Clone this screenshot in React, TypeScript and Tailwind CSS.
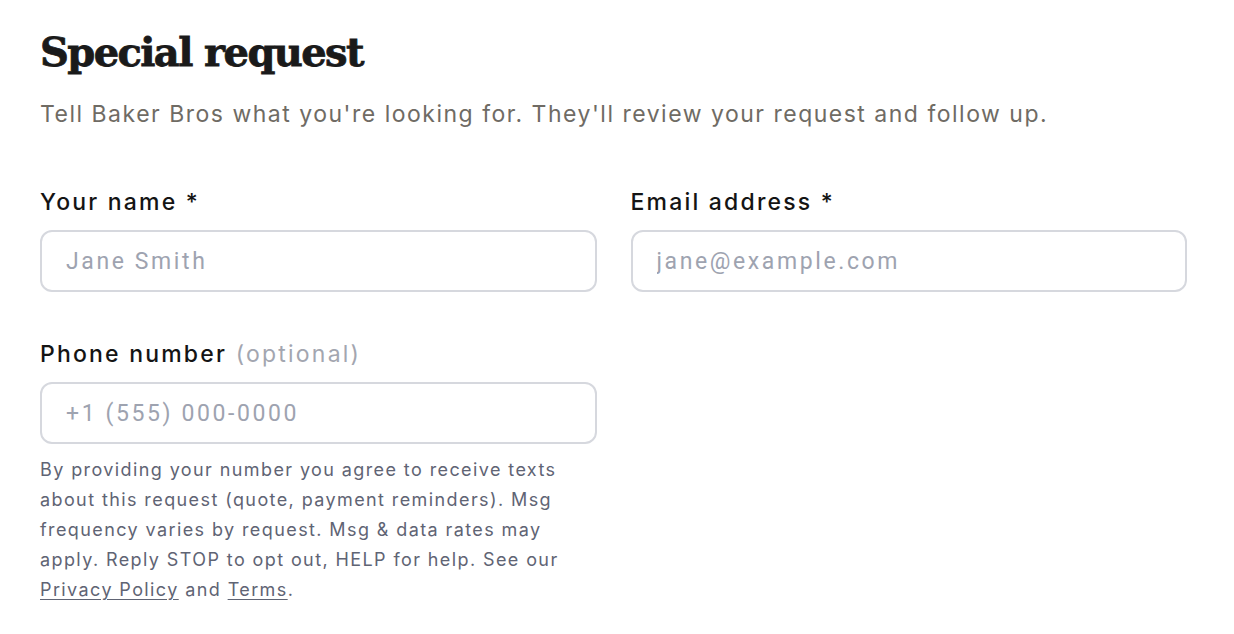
import React from "react";

function Field({
  label,
  placeholder,
  extra,
}: {
  label: string;
  placeholder: string;
  extra?: string;
}) {
  return (
    <div className="flex flex-col">
      <label className="text-[23px] leading-[30px] text-[#141414] font-medium tracking-[2.2px]">
        {label}
        {extra && <span className="text-[#a3a6b0] font-normal"> {extra}</span>}
      </label>
      <input
        className="mt-[13px] w-full h-[62px] rounded-[12px] border-2 border-[#d6d8de] bg-white px-[24px] font-['Roboto',sans-serif] text-[23px] tracking-[2.6px] text-[#222] placeholder:text-[#9ea3b0] outline-none"
        placeholder={placeholder}
      />
    </div>
  );
}

export default function App() {
  return (
    <div className="min-h-screen bg-white font-['Inter',sans-serif]">
      <div className="px-[40px] pt-[24px]">
        <h1 className="font-['DejaVu_Serif',serif] text-[40px] leading-[56px] font-bold tracking-[-1.6px] text-[#1a1a1a] [-webkit-text-stroke:0.8px_#1a1a1a]">
          Special request
        </h1>
        <p className="mt-[19px] text-[23px] leading-[30px] tracking-[1.5px] text-[#6f6b64]">
          Tell Baker Bros what you're looking for. They'll review your request and follow up.
        </p>

        <div className="mt-[58px] grid w-[1147px] grid-cols-2 gap-x-[34px] gap-y-[47px]">
          <Field label="Your name *" placeholder="Jane Smith" />
          <Field label="Email address *" placeholder="jane@example.com" />
          <div className="flex flex-col">
            <Field label="Phone number" extra="(optional)" placeholder="+1 (555) 000-0000" />
            <p className="mt-[11px] text-[18px] leading-[30px] tracking-[1.4px] text-[#5f6474]">
              By providing your number you agree to receive texts about this request (quote, payment
              reminders). Msg frequency varies by request. Msg &amp; data rates may apply. Reply STOP
              to opt out, HELP for help. See our{" "}
              <a className="underline underline-offset-[3px]" href="#">
                Privacy Policy
              </a>{" "}
              and{" "}
              <a className="underline underline-offset-[3px]" href="#">
                Terms
              </a>
              .
            </p>
          </div>
          <div />
        </div>
      </div>
    </div>
  );
}
